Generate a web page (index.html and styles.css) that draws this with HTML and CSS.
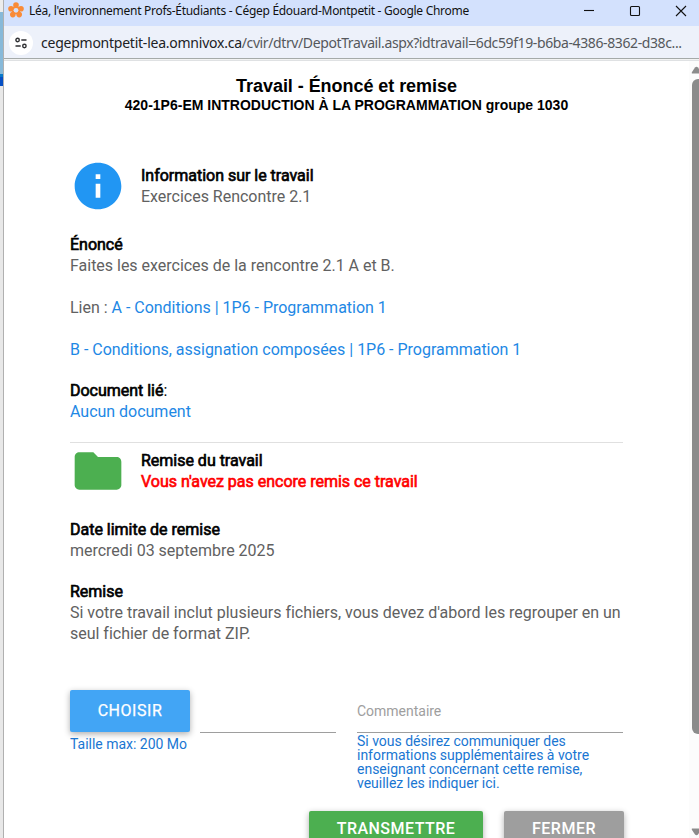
FILE: index.html
```html
<!DOCTYPE html>
<html lang="fr">
<head>
<meta charset="utf-8">
<title>Léa, l'environnement Profs-Étudiants</title>
<link rel="stylesheet" href="styles.css">
</head>
<body>
<div class="screen">
  <div class="desktop-edge"></div>
  <div class="window">
    <header class="titlebar">
      <svg class="favicon" viewBox="0 0 16 16">
        <g fill="#f98b38"><circle cx="8" cy="3.1" r="2.8"/><circle cx="13" cy="6.800" r="2.800"/><circle cx="11.200" cy="12.600" r="2.800"/><circle cx="4.800" cy="12.600" r="2.800"/><circle cx="3" cy="6.800" r="2.800"/><circle cx="8" cy="8" r="4.300"/></g>
        <circle cx="8" cy="8.3" r="2.4" fill="#d3e1fd"/>
      </svg>
      <span class="window-title">Léa, l'environnement Profs-Étudiants - Cégep Édouard-Montpetit - Google Chrome</span>
      <svg class="controls" viewBox="0 0 108 12" fill="none" stroke="#111" stroke-width="1.1">
        <path d="M1 5.5h10"/><rect x="47.5" y="1.5" width="9" height="9" rx="1"/><path d="M93 1l10 10M103 1l-10 10"/>
      </svg>
    </header>
    <div class="addressbar">
      <span class="site-button">
        <svg viewBox="0 0 12 12" width="12" height="12" fill="none" stroke="#303134" stroke-width="1.4"><circle cx="2.6" cy="3" r="1.7"/><path d="M6.3 3h5.2M.5 9h5.2"/><circle cx="9.4" cy="9" r="1.7"/></svg>
      </span>
      <span class="url">cegepmontpetit-lea.omnivox.ca<span class="path">/cvir/dtrv/DepotTravail.aspx?idtravail=6dc59f19-b6ba-4386-8362-d38c...</span></span>
    </div>
    <div class="viewport">
      <main class="page">
        <h1>Travail - Énoncé et remise</h1>
        <h2>420-1P6-EM INTRODUCTION À LA PROGRAMMATION groupe 1030</h2>
        <section class="info">
          <div class="heading">
            <svg class="icon" viewBox="0 0 24 24"><path fill="#2196f3" d="M12 2C6.48 2 2 6.48 2 12s4.48 10 10 10 10-4.48 10-10S17.520 2 12 2zm1 15h-2v-6h2v6zm0-8h-2V7h2v2z"/></svg>
            <div><strong>Information sur le travail</strong><p>Exercices Rencontre 2.1</p></div>
          </div>
          <div class="block statement"><strong>Énoncé</strong><p>Faites les exercices de la rencontre 2.1 A et B.</p></div>
          <p class="block">Lien : <a>A - Conditions | 1P6 - Programmation 1</a></p>
          <p class="block"><a>B - Conditions, assignation composées | 1P6 - Programmation 1</a></p>
          <div class="block document"><strong>Document lié</strong><span class="colon">:</span><p><a>Aucun document</a></p></div>
        </section>
        <section class="submission">
          <div class="heading">
            <svg class="icon folder" viewBox="0 0 24 24"><path fill="#4caf50" d="M10 4H4c-1.100 0-1.990.9-1.990 2L2 18c0 1.100.9 2 2 2h16c1.100 0 2-.9 2-2V8c0-1.100-.9-2-2-2h-8l-2-2z"/></svg>
            <div><strong>Remise du travail</strong><p><strong class="alert">Vous n'avez pas encore remis ce travail</strong></p></div>
          </div>
          <div class="block due"><strong>Date limite de remise</strong><p>mercredi 03 septembre 2025</p></div>
          <div class="block"><strong>Remise</strong><p>Si votre travail inclut plusieurs fichiers, vous devez d'abord les regrouper en un seul fichier de format ZIP.</p></div>
          <form class="form">
            <div class="file"><button type="button" class="btn choose">CHOISIR</button><small>Taille max: 200 Mo</small></div>
            <div class="field filename"></div>
            <div class="comment"><div class="field">Commentaire</div><small>Si vous désirez communiquer des informations supplémentaires à votre enseignant concernant cette remise, veuillez les indiquer ici.</small></div>
          </form>
          <div class="actions"><button type="button" class="btn send">TRANSMETTRE</button><button type="button" class="btn close">FERMER</button></div>
        </section>
      </main>
      <div class="scrollbar">
        <svg width="10" height="8" viewBox="0 0 10 8"><path d="M3 7.500Q2.500 7 3 6L6 1.500Q7.500 0 9 1.500L12 6v1.500z" fill="#8b8b8b"/></svg>
        <span class="thumb"></span>
        <svg class="down" width="10" height="8" viewBox="0 0 10 8"><path d="M3 .5Q2.500 1 3 2L6 6.500Q7.500 8 9 6.500L12 2V.5z" fill="#8b8b8b"/></svg>
      </div>
    </div>
  </div>
</div>
</body>
</html>
```
FILE: styles.css
```css
* { box-sizing: border-box; }
body { margin: 0; background: #fff; }
p, h1, h2 { margin: 0; }
.screen { display: flex; width: 699px; height: 838px; overflow: hidden; }
.desktop-edge {
  flex: 0 0 4px;
  border-right: 1px solid #b0b0b0;
  background: linear-gradient(#ececec 0 12px, #87b9d9 12px 74px, #0879c9 74px 77px, #064fc4 77px 86px, #e8e8e8 86px);
}
.window { width: 695px; display: flex; flex-direction: column; }
.titlebar { flex: 0 0 26px; display: flex; align-items: flex-start; background: #d3e1fd; padding: 2px 0 0 4px; }
.favicon { width: 16px; height: 16px; }
.window-title { margin-left: 5px; width: 460px; white-space: nowrap; font: 12px/18px "Noto Sans", sans-serif; letter-spacing: -.285px; color: #111; }
.controls { width: 108px; height: 12px; margin: 3px 0 0 94px; }
.addressbar { flex: 0 0 35px; display: flex; align-items: center; padding: 0 0 1px 5px; background: linear-gradient(#edf1fa 0 32px, #a5aaa9 32px 33px, #f2f3f3 33px 34px, #dfe1e3 34px); }
.site-button { width: 24px; height: 24px; border-radius: 50%; background: #fff; display: flex; align-items: center; justify-content: center; }
.url { margin-left: 8px; white-space: nowrap; font: 14px/20px "Noto Sans", sans-serif; letter-spacing: -.24px; color: #202124; }
.path { color: #55585c; letter-spacing: -.39px; }
.viewport { flex: 1; min-height: 0; display: flex; background: #fff; }
.page { width: 685px; flex: none; padding: 15px 66px 0; overflow: hidden; font: 16px/21px Roboto, sans-serif; letter-spacing: -.015px; color: #616161; }
h1, h2 { text-align: center; color: #000; font-family: "Liberation Sans", sans-serif; white-space: nowrap; letter-spacing: 0; }
h1 { font-size: 18px; line-height: 20px; letter-spacing: -.05px; }
h2 { font-size: 14px; line-height: 18px; }
.info { padding-top: 45px; height: 329px; border-bottom: 1px solid #e0e0e0; }
.heading { display: flex; height: 52px; padding-top: 6px; }
.icon { width: 56px; height: 56px; margin: -7px 15px 0 0; }
.icon.folder { margin-top: -7px; }
strong { font-weight: 400; color: #000; -webkit-text-stroke: .65px currentColor; }
strong.alert { color: #f00; }
.colon { color: #000; }
.block { margin-bottom: 21px; }
.statement { padding-top: 23px; }
.document { margin-top: -1px; }
a { color: #1e88e5; }
.submission > .heading { padding-top: 7px; }
.due { padding-top: 24px; margin-bottom: 20px; }
.form { display: flex; margin-top: 46px; height: 121px; }
.file { width: 120px; }
small { display: block; font-size: 14px; line-height: 14px; color: #1976d2; }
.file small { margin-top: 5px; white-space: nowrap; }
.btn { display: block; flex: none; border: 0; border-radius: 2px; padding: 0; height: 36px; font: 500 16px/36px Roboto, sans-serif; letter-spacing: .48px; color: #fff; box-shadow: 0 2px 6px rgba(0,0,0,.32); }
.choose { width: 120px; height: 42px; line-height: 42px; background: #42a5f5; font-weight: 400; letter-spacing: .55px; -webkit-text-stroke: .25px #fff; }
.field { height: 43px; border-bottom: 1px solid #9e9e9e; font-size: 14px; line-height: 43px; color: #9e9e9e; }
.filename { width: 136px; margin: 0 21px 0 10px; }
.comment { width: 266px; }
.comment small { margin-top: 1px; width: 240px; }
.actions { display: flex; gap: 21px; margin-left: 239px; }
.send { width: 174px; background: #4caf50; }
.close { width: 120px; background: #9e9e9e; }
.scrollbar { width: 10px; background: #fcfcfc; display: flex; flex-direction: column; padding-top: 5px; overflow: hidden; }
.thumb { width: 12px; height: 655px; margin: 5px 0 0 3px; border-radius: 6px; background: #8b8b8b; flex: none; }
.down { margin-top: 94px; flex: none; }
```
